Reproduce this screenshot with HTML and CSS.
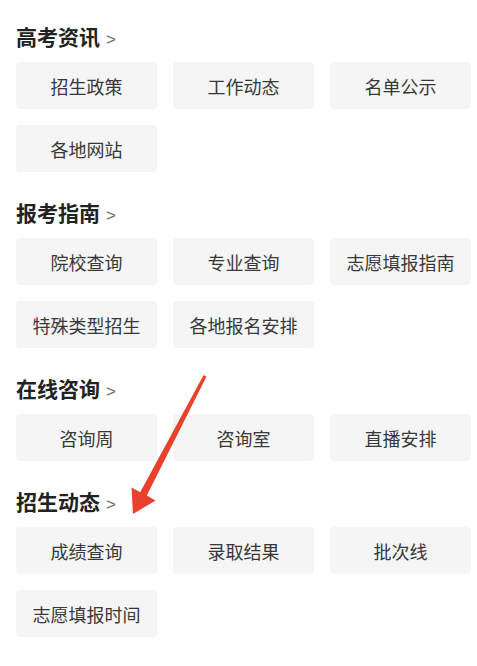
FILE: index.html
```html
<!DOCTYPE html>
<html lang="zh-CN">
<head>
    <meta charset="UTF-8">
    <meta name="viewport" content="width=device-width, initial-scale=1.0">
    <title>高考服务</title>
    <link rel="stylesheet" href="styles.css">
</head>
<body>
    <div class="section">
        <h2 class="section-title">高考资讯<span class="more">&gt;</span></h2>
        <div class="grid">
            <a class="item">招生政策</a>
            <a class="item">工作动态</a>
            <a class="item">名单公示</a>
            <a class="item">各地网站</a>
        </div>
    </div>

    <div class="section">
        <h2 class="section-title">报考指南<span class="more">&gt;</span></h2>
        <div class="grid">
            <a class="item">院校查询</a>
            <a class="item">专业查询</a>
            <a class="item">志愿填报指南</a>
            <a class="item">特殊类型招生</a>
            <a class="item">各地报名安排</a>
        </div>
    </div>

    <div class="section">
        <h2 class="section-title">在线咨询<span class="more">&gt;</span></h2>
        <div class="grid">
            <a class="item">咨询周</a>
            <a class="item">咨询室</a>
            <a class="item">直播安排</a>
        </div>
    </div>

    <div class="section">
        <h2 class="section-title">招生动态<span class="more">&gt;</span></h2>
        <div class="grid">
            <a class="item">成绩查询</a>
            <a class="item">录取结果</a>
            <a class="item">批次线</a>
            <a class="item">志愿填报时间</a>
        </div>
    </div>

    <!-- annotation arrow drawn over the page -->
    <svg class="arrow" width="477" height="666" viewBox="0 0 477 666">
        <polygon points="203.6,375 206.4,376.8 146.8,495.4 155.5,500.5 133,514 131.5,487.5 140.2,492.2" fill="#e9412b"/>
    </svg>
</body>
</html>
```

FILE: styles.css
```css
body {
    margin: 0;
    padding: 23px 0 0 16px;
    background-color: #fff;
    font-family: "Noto Sans CJK SC", "Noto Sans", sans-serif;
    color: #333;
    position: relative;
}
.section {
    margin-bottom: 27px;
}
.section-title {
    margin: 0 0 13px;
    height: 26px;
    line-height: 26px;
    font-size: 21px;
    font-weight: bold;
    color: #222;
}
.more {
    margin-left: 6px;
    font-family: "Liberation Sans", sans-serif;
    font-size: 17px;
    font-weight: normal;
    color: #666;
}
.grid {
    display: grid;
    grid-template-columns: repeat(3, 141px);
    gap: 16px;
}
.item {
    height: 47px;
    display: flex;
    align-items: center;
    justify-content: center;
    background-color: #f5f5f5;
    border-radius: 4px;
    font-size: 18px;
    color: #383838;
}
.arrow {
    position: absolute;
    left: 0;
    top: 0;
    pointer-events: none;
}
```
